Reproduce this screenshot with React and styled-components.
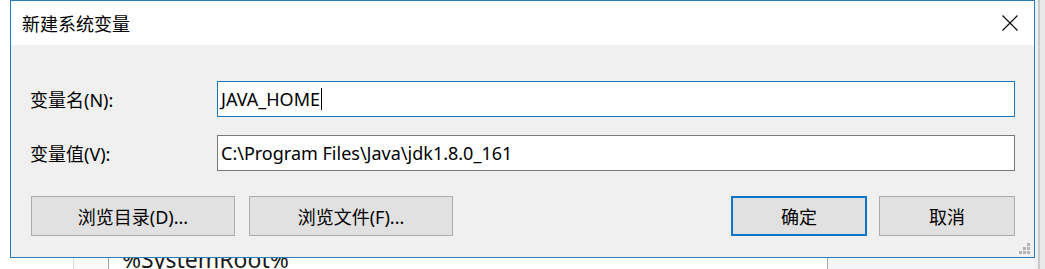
import React from 'react'
import styled, { createGlobalStyle } from 'styled-components'

const GlobalStyle = createGlobalStyle`
  html, body {
    margin: 0;
    padding: 0;
  }
  body {
    background: #ffffff;
    font-family: "Noto Sans", "Noto Sans CJK SC", sans-serif;
    overflow: hidden;
  }
`

const Screen = styled.div`
  display: grid;
  grid-template-columns: 10px 1025px 10px;
  grid-template-rows: 258px 11px;
  width: 1045px;
  height: 269px;
  overflow: hidden;
  background: #ffffff;
`

/* window behind the dialog */
const EdgeStrip = styled.div`
  grid-column: 3;
  grid-row: 1 / 3;
  display: flex;
`
const EdgePart = styled.div`
  width: ${p => p.$w}px;
  flex: ${p => (p.$w ? 'none' : 1)};
  background: ${p => p.$bg};
`

const BehindRow = styled.div`
  grid-column: 1 / 3;
  grid-row: 2;
  display: flex;
  overflow: hidden;
  background: #ffffff;
`
const Gap = styled.div`
  width: ${p => p.$w}px;
  flex: none;
`
const IconCell = styled.div`
  width: 34px;
  flex: none;
  background: #fafafa;
  border-left: 1px solid #dcdcdc;
  border-right: 1px solid #a3a3a3;
`
const BehindText = styled.div`
  width: 705px;
  flex: none;
  padding-left: 13px;
  display: flex;
  align-items: flex-end;
  font-size: 23px;
  line-height: 23px;
  color: #1a1a1a;
  white-space: nowrap;
  & > span {
    margin-bottom: -2px;
  }
`
const SidePane = styled.div`
  flex: 1;
  border-left: 1px solid #a8a8a8;
  background: #f4f5f7;
`

/* the dialog */
const Dialog = styled.div`
  grid-column: 2;
  grid-row: 1;
  position: relative;
  box-sizing: border-box;
  display: flex;
  flex-direction: column;
  border: 1px solid #2c7bb5;
  background: #f0f0f0;
`

const TitleBar = styled.div`
  height: 44px;
  flex: none;
  display: flex;
  align-items: center;
  justify-content: space-between;
  padding-left: 11px;
  background: #ffffff;
`
const Title = styled.div`
  font-size: 18px;
  color: #000000;
`
const CloseButton = styled.div`
  width: 49px;
  height: 44px;
  display: flex;
  align-items: center;
  justify-content: center;
`

const Body = styled.div`
  flex: 1;
  padding: 36px 19px 0 19px;
`
const Form = styled.div`
  display: flex;
  flex-direction: column;
  gap: 18px;
`
const FieldRow = styled.div`
  display: grid;
  grid-template-columns: 187px 1fr;
  align-items: center;
`
const Label = styled.div`
  font-size: 18px;
  color: #000000;
`
const TextBox = styled.div`
  height: 36px;
  box-sizing: border-box;
  display: flex;
  align-items: center;
  padding: 0 3px;
  background: #ffffff;
  border: 1px solid ${p => (p.$focused ? '#1b76b8' : '#7a7a7a')};
  font-size: 18px;
  color: #000000;
  white-space: nowrap;
`
const Caret = styled.span`
  display: inline-block;
  width: 1px;
  height: 22px;
  margin-left: 1px;
  background: #000000;
`

const ButtonRow = styled.div`
  display: flex;
  margin-top: 25px;
  padding-left: 1px;
`
const Spacer = styled.div`
  flex: 1;
`
const Button = styled.div`
  width: ${p => p.$w}px;
  height: 40px;
  box-sizing: border-box;
  margin-left: ${p => p.$gap || 0}px;
  display: flex;
  align-items: center;
  justify-content: center;
  background: #e1e1e1;
  border: ${p => (p.$default ? '2px solid #0f74c4' : '1px solid #adadad')};
  font-size: 18px;
  color: #000000;
`

const Grip = styled.svg`
  position: absolute;
  right: 4px;
  bottom: 3px;
`

export default function App() {
  return (
    <>
      <GlobalStyle />
      <Screen>
        <Dialog>
          <TitleBar>
            <Title>新建系统变量</Title>
            <CloseButton>
              <svg width="16" height="16" viewBox="0 0 16 16">
                <path d="M0.5 0.5 L15.5 15.5 M15.5 0.5 L0.5 15.5" stroke="#000" strokeWidth="1.1" fill="none" />
              </svg>
            </CloseButton>
          </TitleBar>
          <Body>
            <Form>
              <FieldRow>
                <Label>变量名(N):</Label>
                <TextBox $focused>
                  JAVA_HOME<Caret />
                </TextBox>
              </FieldRow>
              <FieldRow>
                <Label>变量值(V):</Label>
                <TextBox>C:\Program Files\Java\jdk1.8.0_161</TextBox>
              </FieldRow>
            </Form>
            <ButtonRow>
              <Button $w={204}>浏览目录(D)...</Button>
              <Button $w={204} $gap={14}>浏览文件(F)...</Button>
              <Spacer />
              <Button $w={136} $default>确定</Button>
              <Button $w={136} $gap={12}>取消</Button>
            </ButtonRow>
          </Body>
          <Grip width="11" height="11" viewBox="0 0 11 11">
            <g fill="#b4b4b4">
              <rect x="8" y="0" width="3" height="3" />
              <rect x="4" y="4" width="3" height="3" />
              <rect x="8" y="4" width="3" height="3" />
              <rect x="0" y="8" width="3" height="3" />
              <rect x="4" y="8" width="3" height="3" />
              <rect x="8" y="8" width="3" height="3" />
            </g>
          </Grip>
        </Dialog>
        <EdgeStrip>
          <EdgePart $w={3} $bg="#f0f0f0" />
          <EdgePart $w={2} $bg="#c9c9c9" />
          <EdgePart $bg="#e9e9e9" />
        </EdgeStrip>
        <BehindRow>
          <Gap $w={73} />
          <IconCell />
          <BehindText><span>%SystemRoot%</span></BehindText>
          <SidePane />
        </BehindRow>
      </Screen>
    </>
  )
}
